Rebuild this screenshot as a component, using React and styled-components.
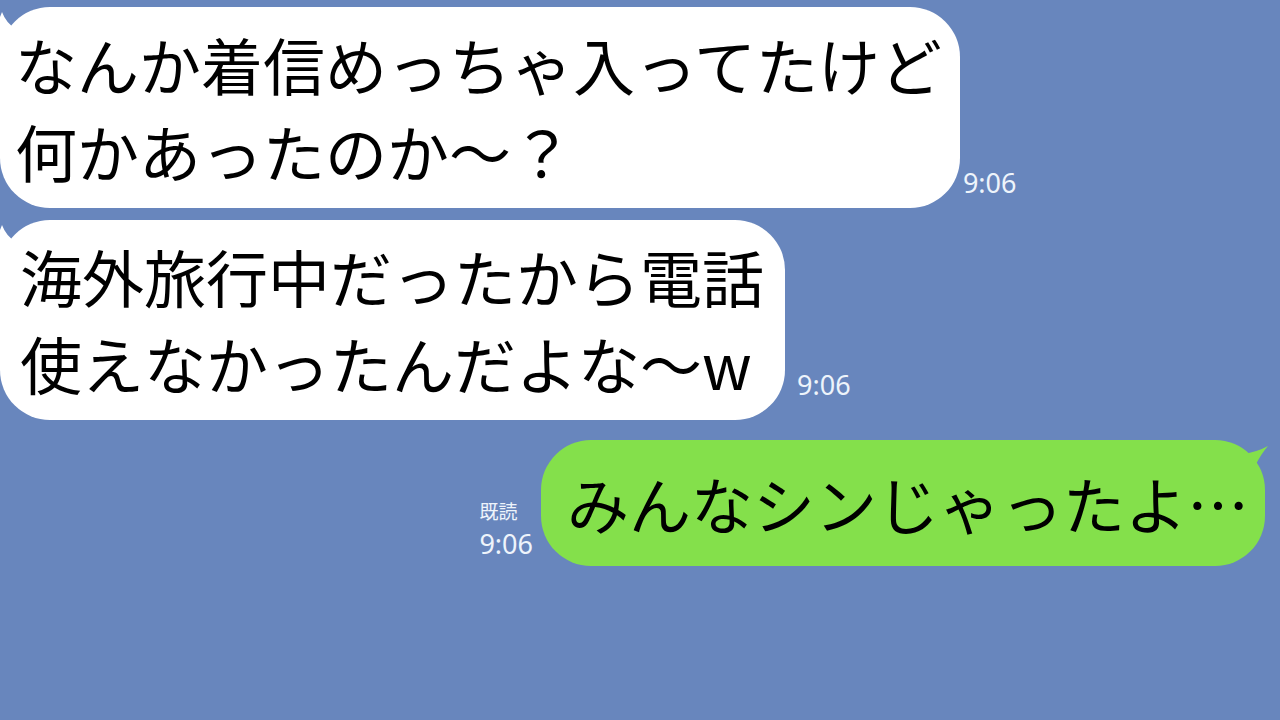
import React from 'react';
import styled, { createGlobalStyle } from 'styled-components';

const GlobalStyle = createGlobalStyle`
  html, body {
    margin: 0;
    padding: 0;
    background: #6886bd;
  }
  body {
    width: 1280px;
    height: 720px;
    overflow: hidden;
  }
`;

const messages = [
  { id: 1, mine: false, lines: ['なんか着信めっちゃ入ってたけど', '何かあったのか～？'], time: '9:06', pad: [14, 18, 13, 15], metaGap: 3, metaBottom: 7 },
  { id: 2, mine: false, lines: ['海外旅行中だったから電話', '使えなかったんだよな～w'], time: '9:06', pad: [13, 21, 13, 20], metaGap: 12, metaBottom: 17 },
  { id: 3, mine: true, lines: ['みんなシンじゃったよ…'], time: '9:06', read: '既読', pad: [20, 16, 19, 26], metaGap: 8, metaBottom: 4 },
];

const Chat = styled.main`
  display: flex;
  flex-direction: column;
  gap: 12px;
  padding: 7px 15px 0 0;
  font-family: 'Noto Sans CJK JP', 'Noto Sans', sans-serif;
`;

const Row = styled.div`
  display: flex;
  align-items: flex-end;
  justify-content: ${(p) => (p.$mine ? 'flex-end' : 'flex-start')};
  margin-top: ${(p) => (p.$mine ? '8px' : '0')};
`;

const Bubble = styled.div`
  position: relative;
  background: ${(p) => (p.$mine ? '#84e04b' : '#ffffff')};
  color: #000;
  border-radius: 50px;
  font-size: 62px;
  line-height: 87px;
  white-space: pre;
`;

const Tail = styled.svg`
  position: absolute;
  top: 0;
  width: 40px;
  height: 50px;
  overflow: visible;
  ${(p) => (p.$mine ? 'right: -8px;' : 'left: 0;')}
`;

const Meta = styled.div`
  display: flex;
  flex-direction: column;
  align-items: flex-start;
  color: #eef4fb;
  margin: 0 ${(p) => (p.$mine ? p.$gap : 0)}px ${(p) => p.$bottom}px ${(p) => (p.$mine ? 0 : p.$gap)}px;
`;

const Read = styled.span`
  display: block;
  font-family: 'Noto Sans CJK JP', sans-serif;
  font-size: 19px;
  line-height: 28px;
`;

const Time = styled.span`
  display: block;
  font-family: 'Noto Sans', sans-serif;
  font-size: 27px;
  line-height: 37px;
`;

const BubbleTail = ({ mine }) =>
  mine ? (
    <Tail $mine viewBox="0 0 40 50">
      <path d="M10 14 Q24 12 35 6 Q28 14 22 26 Z" fill="#84e04b" />
    </Tail>
  ) : (
    <Tail viewBox="0 0 40 50">
      <path d="M2 5 Q6 16 16 22 L10 50 L0 50 L0 10 Z" fill="#ffffff" />
    </Tail>
  );

const App = () => (
  <>
    <GlobalStyle />
    <Chat>
      {messages.map((m) => {
        const meta = (
          <Meta $mine={m.mine} $gap={m.metaGap} $bottom={m.metaBottom}>
            {m.read && <Read>{m.read}</Read>}
            <Time>{m.time}</Time>
          </Meta>
        );
        return (
          <Row key={m.id} $mine={m.mine}>
            {m.mine && meta}
            <Bubble $mine={m.mine} style={{ padding: m.pad.map((v) => v + 'px').join(' ') }}>
              <BubbleTail mine={m.mine} />
              {m.lines.join('\n')}
            </Bubble>
            {!m.mine && meta}
          </Row>
        );
      })}
    </Chat>
  </>
);

export default App;
